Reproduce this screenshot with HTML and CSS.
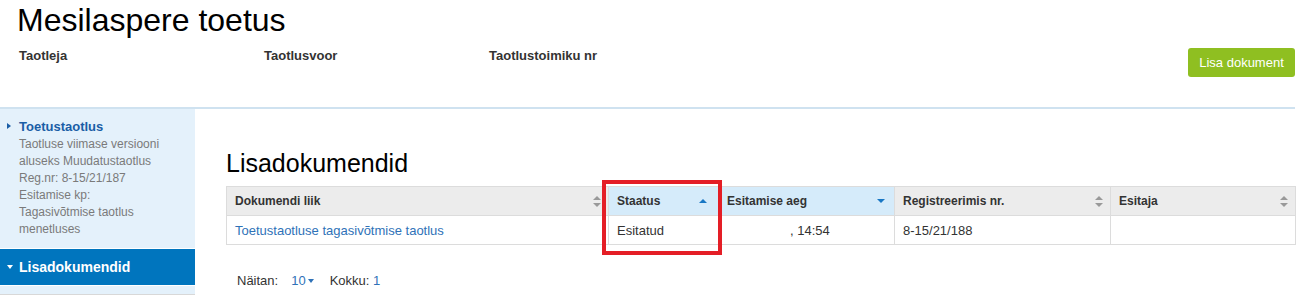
FILE: index.html
```html
<!DOCTYPE html>
<html lang="et">
<head>
<meta charset="utf-8">
<title>Mesilaspere toetus</title>
<link rel="stylesheet" href="styles.css">
</head>
<body>
<div class="page">
  <header class="top">
    <h1 class="title">Mesilaspere toetus</h1>
    <div class="meta-row">
      <div class="meta">
        <div class="meta-item w1">Taotleja</div>
        <div class="meta-item w2">Taotlusvoor</div>
        <div class="meta-item">Taotlustoimiku nr</div>
      </div>
      <button class="btn-add">Lisa dokument</button>
    </div>
  </header>
  <div class="layout">
    <aside class="sidebar">
      <div class="side-item">
        <div class="side-head"><span class="tri-right"></span>Toetustaotlus</div>
        <div class="side-sub">Taotluse viimase versiooni aluseks Muudatustaotlus</div>
        <div class="side-sub">Reg.nr: 8-15/21/187</div>
        <div class="side-sub">Esitamise kp:</div>
        <div class="side-sub">Tagasivõtmise taotlus menetluses</div>
      </div>
      <div class="side-active"><span class="tri-down"></span>Lisadokumendid</div>
      <div class="side-rest"></div>
    </aside>
    <main class="main">
      <h2 class="section-title">Lisadokumendid</h2>
      <div class="table-wrap">
        <table class="docs">
          <thead>
            <tr>
              <th class="c1"><div class="th-in"><span>Dokumendi liik</span><span class="sort-both"></span></div></th>
              <th class="c2 sorted"><div class="th-in"><span>Staatus</span><span class="sort-up"></span></div></th>
              <th class="c3 sorted"><div class="th-in"><span>Esitamise aeg</span><span class="sort-down"></span></div></th>
              <th class="c4"><div class="th-in"><span>Registreerimis nr.</span><span class="sort-both"></span></div></th>
              <th class="c5"><div class="th-in"><span>Esitaja</span><span class="sort-both"></span></div></th>
            </tr>
          </thead>
          <tbody>
            <tr>
              <td><a class="doc-link" href="#">Toetustaotluse tagasivõtmise taotlus</a></td>
              <td>Esitatud</td>
              <td class="time">, 14:54</td>
              <td>8-15/21/188</td>
              <td></td>
            </tr>
          </tbody>
        </table>
        <div class="highlight"></div>
      </div>
      <div class="pager">
        <span>Näitan:</span>
        <span class="pager-size">10<span class="caret"></span></span>
        <span>Kokku: <span class="blue">1</span></span>
      </div>
    </main>
  </div>
</div>
</body>
</html>
```

FILE: styles.css
```css
* { box-sizing: border-box; }
html, body { margin: 0; padding: 0; background: #fff; }
body {
  font-family: "Liberation Sans", Arial, sans-serif;
  color: #333;
  width: 1305px;
  height: 295px;
  overflow: hidden;
}
.page { margin-right: 10px; }

.top {
  padding: 2px 0 0 17px;
  height: 109px;
  border-bottom: 2px solid #cfe2f0;
}
.title {
  margin: 0;
  font-size: 32px;
  line-height: 37px;
  font-weight: normal;
  color: #000;
}
.meta-row {
  margin-top: 9px;
  display: flex;
  justify-content: space-between;
  align-items: flex-start;
}
.meta { display: flex; padding-left: 2px; }
.meta-item {
  font-size: 13px;
  font-weight: bold;
  line-height: 16px;
  color: #333;
}
.meta-item.w1 { width: 245px; }
.meta-item.w2 { width: 225px; }
.btn-add {
  background: #8fbf21;
  border: none;
  border-radius: 3px;
  color: #fff;
  font-family: "Liberation Sans", Arial, sans-serif;
  font-size: 13px;
  height: 29px;
  width: 107px;
  padding: 0;
}

.layout { display: flex; }
.sidebar {
  width: 195px;
  background: #e4f1fb;
  flex: none;
}
.side-item { padding: 9px 0 10px 19px; position: relative; }
.side-head {
  font-size: 13px;
  font-weight: bold;
  color: #1a5ea6;
  line-height: 18px;
  position: relative;
}
.tri-right {
  position: absolute;
  left: -12px;
  top: 5px;
  width: 0; height: 0;
  border-top: 3.5px solid transparent;
  border-bottom: 3.5px solid transparent;
  border-left: 4px solid #1a5ea6;
}
.side-sub {
  font-size: 12px;
  line-height: 17px;
  color: #7a7a7a;
  width: 165px;
}
.side-active {
  border-top: 1px solid #fff;
  border-bottom: 1px solid #fff;
  background: #0075be;
  color: #fff;
  font-weight: bold;
  font-size: 14px;
  height: 38px;
  line-height: 36px;
  padding-left: 19px;
  position: relative;
}
.tri-down {
  position: absolute;
  left: 7px;
  top: 16px;
  width: 0; height: 0;
  border-left: 3.5px solid transparent;
  border-right: 3.5px solid transparent;
  border-top: 4px solid #fff;
}
.side-rest {
  height: 10px;
  border-bottom: 2px solid #d8d8d8;
}

.main { flex: 1; padding-left: 31px; }
.section-title {
  margin: 39px 0 8px 0;
  font-size: 25px;
  line-height: 30px;
  font-weight: normal;
  color: #000;
}
.table-wrap { position: relative; }
.docs {
  border-collapse: collapse;
  width: 1069px;
  table-layout: fixed;
  font-size: 13px;
}
.docs th, .docs td {
  border: 1px solid #dcdcdc;
  padding: 0 8px;
  text-align: left;
}
.docs th {
  background: #ececec;
  height: 29px;
  font-size: 12px;
  font-weight: bold;
  color: #333;
}
.docs th.sorted { background: #d5ebfa; }
.docs td { height: 29px; color: #333; }
.c1 { width: 382px; }
.c2 { width: 110px; }
.c3 { width: 176px; }
.c4 { width: 216px; }
.c5 { width: 185px; }
.th-in {
  display: flex;
  justify-content: space-between;
  align-items: center;
}
.sort-both {
  display: inline-block;
  width: 8px;
  height: 11px;
  position: relative;
  margin-right: -1px;
}
.sort-both::before, .sort-both::after {
  content: "";
  position: absolute;
  left: 0;
  border-left: 4px solid transparent;
  border-right: 4px solid transparent;
}
.sort-both::before { top: 0; border-bottom: 4px solid #999; }
.sort-both::after { bottom: 0; border-top: 4px solid #999; }
.sort-up {
  width: 0; height: 0;
  border-left: 4px solid transparent;
  border-right: 4px solid transparent;
  border-bottom: 4px solid #1877c4;
  margin-right: 3px;
}
.sort-down {
  width: 0; height: 0;
  border-left: 4px solid transparent;
  border-right: 4px solid transparent;
  border-top: 4px solid #1877c4;
  margin-right: 1px;
}
.doc-link { color: #2f72b8; text-decoration: none; }
.time { padding-left: 71px !important; }
.highlight {
  position: absolute;
  left: 376px;
  top: -6px;
  width: 120px;
  height: 75px;
  border: 4px solid #e41e26;
}
.pager {
  margin-top: 28px;
  padding-left: 11px;
  font-size: 13px;
  line-height: 15px;
  color: #333;
  display: flex;
}
.pager-size {
  color: #2f72b8;
  margin-left: 13px;
  display: inline-flex;
  align-items: center;
}
.pager-size + span { margin-left: 16px; }
.caret {
  display: inline-block;
  margin-left: 2px;
  width: 0; height: 0;
  border-left: 3.5px solid transparent;
  border-right: 3.5px solid transparent;
  border-top: 4px solid #2f72b8;
}
.blue { color: #2f72b8; }
```
